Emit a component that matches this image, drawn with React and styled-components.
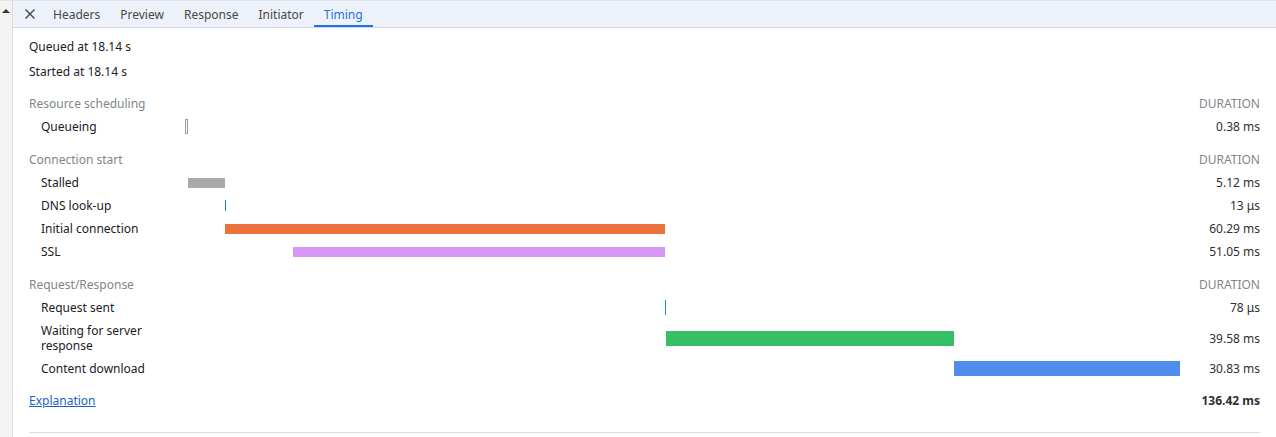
import React from 'react';
import styled, { createGlobalStyle } from 'styled-components';

const GlobalStyle = createGlobalStyle`
  html, body {
    margin: 0;
    padding: 0;
    background: #ffffff;
  }
  body {
    font-family: "Noto Sans", "Liberation Sans", sans-serif;
    font-size: 12px;
    color: #202124;
  }
`;

const TOTAL = 136.42;

const sections = [
  {
    title: 'Resource scheduling',
    rows: [
      { label: 'Queueing', start: 0, dur: 0.38, value: '0.38 ms', kind: 'queue', h: 15 },
    ],
  },
  {
    title: 'Connection start',
    rows: [
      { label: 'Stalled', start: 0.38, dur: 5.12, value: '5.12 ms', color: '#aaaaaa', h: 10 },
      { label: 'DNS look-up', start: 5.5, dur: 0.013, value: '13 μs', color: '#0a8e91', h: 11 },
      { label: 'Initial connection', start: 5.51, dur: 60.29, value: '60.29 ms', color: '#eb713c', h: 10 },
      { label: 'SSL', start: 14.81, dur: 51.05, value: '51.05 ms', color: '#d696f3', h: 10 },
    ],
  },
  {
    title: 'Request/Response',
    rows: [
      { label: 'Request sent', start: 65.85, dur: 0.078, value: '78 μs', color: '#1496c2', h: 15 },
      { label: 'Waiting for server response', start: 65.9, dur: 39.58, value: '39.58 ms', color: '#37bf67', h: 15, tall: true },
      { label: 'Content download', start: 105.48, dur: 30.94, value: '30.83 ms', color: '#4f8dec', h: 15 },
    ],
  },
];

const Page = styled.div`
  display: flex;
  width: 1276px;
  height: 437px;
  overflow: hidden;
`;

const Gutter = styled.div`
  width: 13px;
  flex: none;
  background: #f3f3f3;
  border-right: 1px solid #dcdcdc;
  border-top: 1px solid #e3e3e3;
  display: flex;
  justify-content: center;
  padding-top: 8px;
  box-sizing: border-box;
`;

const Caret = styled.div`
  width: 0;
  height: 0;
  border-left: 4px solid transparent;
  border-right: 4px solid transparent;
  border-bottom: 4px solid #333;
`;

const Main = styled.div`
  flex: 1;
  display: flex;
  flex-direction: column;
  min-width: 0;
`;

const TabBar = styled.div`
  display: flex;
  align-items: stretch;
  background: #edf2fa;
  border-top: 1px solid #dfe3ec;
  border-bottom: 1px solid #d3d8e2;
  box-sizing: border-box;
  height: 28px;
`;

const CloseButton = styled.div`
  width: 26px;
  margin-left: 4px;
  display: flex;
  align-items: center;
  justify-content: center;
  color: #444;
`;

const Tab = styled.div`
  padding: 0 10px;
  display: flex;
  align-items: center;
  color: ${(p) => (p.$active ? '#1a73e8' : '#474747')};
  box-shadow: ${(p) => (p.$active ? 'inset 0 -2px 0 #1a73e8' : 'none')};
  font-size: 12px;
`;

const Content = styled.div`
  padding: 10px 16px 0 16px;
`;

const InfoLine = styled.div`
  line-height: 18px;
  margin-bottom: 7px;
  color: #202124;
`;

const Table = styled.div`
  margin-top: 10px;
`;

const Section = styled.div`
  margin-bottom: 9px;
`;

const Row = styled.div`
  display: grid;
  grid-template-columns: 12px 144px minmax(0, 1fr) 80px;
  align-items: center;
  min-height: ${(p) => (p.$head ? 24 : p.$tall ? 38 : 23)}px;
`;

const HeaderLabel = styled.div`
  grid-column: 1 / 4;
  color: #80868b;
`;

const HeaderDuration = styled.div`
  text-align: right;
  color: #80868b;
  text-transform: uppercase;
`;

const Label = styled.div`
  grid-column: 2;
  line-height: 15px;
  color: #202124;
`;

const BarTrack = styled.div`
  display: flex;
  align-items: center;
  min-width: 0;
`;

const Bar = styled.div`
  flex: none;
  min-width: 1px;
  box-sizing: border-box;
  background: ${(p) => (p.$kind === 'queue' ? '#ffffff' : p.$color)};
  border: ${(p) => (p.$kind === 'queue' ? '1px solid #9a9a9a' : 'none')};
`;

const Duration = styled.div`
  text-align: right;
  color: #303030;
  font-weight: ${(p) => (p.$bold ? 700 : 400)};
`;

const FooterRow = styled.div`
  display: flex;
  justify-content: space-between;
  align-items: center;
  height: 23px;
  margin-top: 3px;
`;

const Link = styled.a`
  color: #1a5fc8;
  text-decoration: underline;
  cursor: pointer;
`;

const Divider = styled.div`
  margin-top: 20px;
  border-top: 1px solid #dedede;
`;

const XIcon = () => (
  <svg width="12" height="12" viewBox="0 0 12 12">
    <path d="M1.5 1.5 L10.5 10.5 M10.5 1.5 L1.5 10.5" stroke="#444" strokeWidth="1.4" fill="none" />
  </svg>
);

const TimingRow = ({ row }) => {
  const left = (row.start / TOTAL) * 100;
  const width = (row.dur / TOTAL) * 100;
  return (
    <Row $tall={row.tall}>
      <Label>{row.label}</Label>
      <BarTrack>
        <Bar
          $kind={row.kind}
          $color={row.color}
          style={{
            marginLeft: `${left}%`,
            width: row.kind === 'queue' ? '3px' : `${width}%`,
            height: `${row.h}px`,
          }}
        />
      </BarTrack>
      <Duration>{row.value}</Duration>
    </Row>
  );
};

const App = () => (
  <>
    <GlobalStyle />
    <Page>
      <Gutter>
        <Caret />
      </Gutter>
      <Main>
        <TabBar>
          <CloseButton>
            <XIcon />
          </CloseButton>
          <Tab>Headers</Tab>
          <Tab>Preview</Tab>
          <Tab>Response</Tab>
          <Tab>Initiator</Tab>
          <Tab $active>Timing</Tab>
        </TabBar>
        <Content>
          <InfoLine>Queued at 18.14 s</InfoLine>
          <InfoLine>Started at 18.14 s</InfoLine>
          <Table>
            {sections.map((s) => (
              <Section key={s.title}>
                <Row $head>
                  <HeaderLabel>{s.title}</HeaderLabel>
                  <HeaderDuration>Duration</HeaderDuration>
                </Row>
                {s.rows.map((r) => (
                  <TimingRow key={r.label} row={r} />
                ))}
              </Section>
            ))}
          </Table>
          <FooterRow>
            <Link>Explanation</Link>
            <Duration $bold>136.42 ms</Duration>
          </FooterRow>
          <Divider />
        </Content>
      </Main>
    </Page>
  </>
);

export default App;
